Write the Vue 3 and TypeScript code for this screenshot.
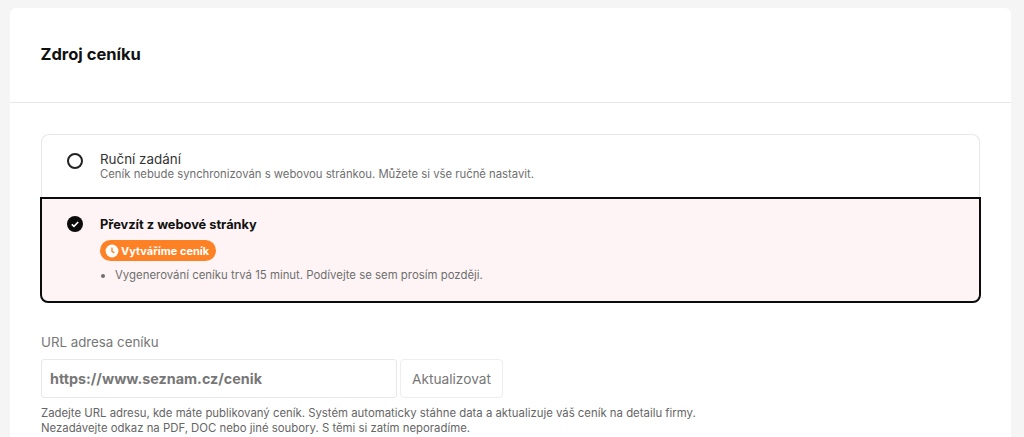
<template>
  <div class="page">
    <section class="card">
      <header class="card-head">
        <h2>Zdroj ceníku</h2>
      </header>
      <div class="card-body">
        <div class="options">
          <div class="option">
            <span class="radio"></span>
            <div class="option-text">
              <div class="option-title">Ruční zadání</div>
              <div class="option-desc">Ceník nebude synchronizován s webovou stránkou. Můžete si vše ručně nastavit.</div>
            </div>
          </div>
          <div class="option selected">
            <svg class="radio-on" width="16" height="16" viewBox="0 0 16 16">
              <circle cx="8" cy="8" r="8" fill="#0b0b0b" />
              <path d="M4.8 8.3l2.2 2.1 4.2-4.4" fill="none" stroke="#fff" stroke-width="1.6" />
            </svg>
            <div class="option-text">
              <div class="option-title strong">Převzít z webové stránky</div>
              <span class="badge">
                <svg width="14" height="14" viewBox="0 0 14 14">
                  <circle cx="7" cy="7" r="6.4" fill="#fff" />
                  <path d="M7 3.6V7.4l2.4 1.5" fill="none" stroke="#ff8125" stroke-width="1.4" />
                </svg>
                Vytváříme ceník
              </span>
              <ul class="notes">
                <li>Vygenerování ceníku trvá 15 minut. Podívejte se sem prosím později.</li>
              </ul>
            </div>
          </div>
        </div>

        <label class="field-label">URL adresa ceníku</label>
        <div class="field-row">
          <input class="url-input" type="text" value="https://www.seznam.cz/cenik" disabled />
          <button class="update-btn" type="button" disabled>Aktualizovat</button>
        </div>
        <p class="hint">
          Zadejte URL adresu, kde máte publikovaný ceník. Systém automaticky stáhne data a aktualizuje váš ceník na detailu firmy.<br />
          Nezadávejte odkaz na PDF, DOC nebo jiné soubory. S těmi si zatím neporadíme.
        </p>
      </div>
    </section>
  </div>
</template>

<script setup lang="ts">
</script>

<style>
html,
body {
  margin: 0;
  background: #f5f5f5;
  overflow: hidden;
}
</style>

<style scoped>
.page {
  height: 437px;
  box-sizing: border-box;
  padding: 8px 13px 0 10px;
  overflow: hidden;
  font-family: Inter, "Liberation Sans", sans-serif;
}

.card {
  background: #fff;
  border-radius: 6px 6px 0 0;
  height: 429px;
  overflow: hidden;
}

.card-head {
  height: 95px;
  box-sizing: border-box;
  padding: 35px 30.5px 0;
  border-bottom: 1px solid #e8e8e8;
}

.card-head h2 {
  margin: 0;
  font-size: 16.5px;
  line-height: 22px;
  font-weight: 700;
  color: #111;
}

.card-body {
  padding: 31px 31px 0;
}

.options {
  display: flex;
  flex-direction: column;
}

.option {
  display: flex;
  gap: 17px;
  box-sizing: border-box;
  height: 63px;
  padding: 16px 17px 0 25px;
  border: 1px solid #e8e8e8;
  border-bottom: 0;
  border-radius: 8px 8px 0 0;
}

.selected {
  height: 106px;
  margin: 0 -1px;
  padding: 17px 17px 0 25px;
  background: #fef4f5;
  border: 2px solid #0b0b0b;
  border-radius: 0 0 8px 8px;
}

.radio {
  flex: none;
  width: 16px;
  height: 16px;
  box-sizing: border-box;
  margin-top: 2px;
  border: 2px solid #222;
  border-radius: 50%;
}

.radio-on {
  flex: none;
  margin-top: 0;
}

.option-text {
  min-width: 0;
}

.option-title {
  font-size: 13.4px;
  line-height: 17px;
  color: #333;
}

.strong {
  font-size: 12.8px;
  font-weight: 700;
  color: #111;
}

.option-desc {
  font-size: 11.3px;
  line-height: 13px;
  color: #6f6f6f;
}

.badge {
  display: inline-flex;
  align-items: center;
  gap: 2px;
  height: 21px;
  margin-top: 7px;
  padding: 0 7px 0 5px;
  border-radius: 11px;
  background: #ff8125;
  color: #fff;
  font-size: 11px;
  font-weight: 700;
}

.notes {
  margin: 6px 0 0;
  padding-left: 15px;
  font-size: 11.4px;
  line-height: 15px;
  color: #6f6f6f;
}

.field-label {
  display: block;
  margin-top: 30px;
  font-size: 13.3px;
  line-height: 18px;
  color: #777;
}

.field-row {
  display: flex;
  gap: 3px;
  margin-top: 8px;
}

.url-input {
  width: 356px;
  height: 39px;
  box-sizing: border-box;
  padding: 0 8px;
  border: 1px solid #e8e8e8;
  border-radius: 3px;
  background: #fff;
  font-family: inherit;
  font-size: 14.35px;
  font-weight: 700;
  color: #777;
}

.update-btn {
  width: 103px;
  height: 39px;
  padding: 0;
  border: 1px solid #eee;
  border-radius: 4px;
  background: #fff;
  font-family: inherit;
  font-size: 13.7px;
  color: #777;
}

.hint {
  margin: 8px 0 0;
  font-size: 11.36px;
  line-height: 15px;
  color: #666;
}
</style>
